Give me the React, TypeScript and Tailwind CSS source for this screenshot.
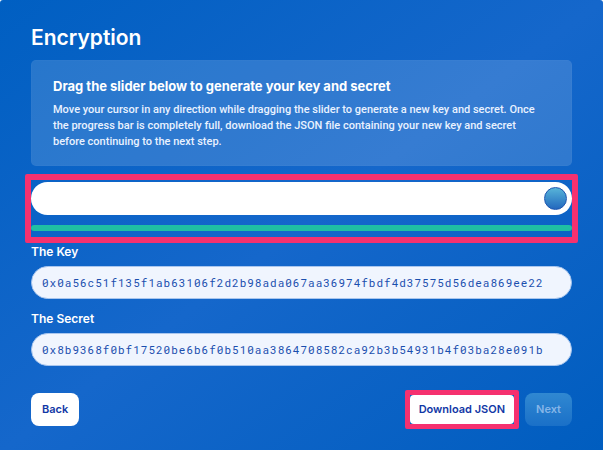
import { useState } from "react";

type FieldProps = { id: string; label: string; value: string };

function HexField({ id, label, value }: FieldProps) {
  return (
    <div className="flex flex-col gap-1.5">
      <label htmlFor={id} className="text-xs leading-4 font-semibold text-white">
        {label}
      </label>
      <input
        id={id}
        type="text"
        readOnly
        value={value}
        className="h-[33px] w-full rounded-full border border-[#a9c6ee] bg-[#f0f5fe] px-2.5 font-['Roboto_Mono','Liberation_Mono',monospace] text-[11px] tracking-[1px] text-[#1b4fae]"
      />
    </div>
  );
}

export default function App() {
  const [position, setPosition] = useState(100);

  return (
    <div className="min-h-screen bg-white font-[Inter,Roboto,sans-serif]">
      <main className="flex min-h-screen flex-col rounded-[3px] bg-[linear-gradient(to_bottom_right,#005fc2_0%,#1567cb_50%,#005dbf_100%)] px-[31px] pt-6 pb-6">
        <h1 className="text-[21px] leading-7 font-semibold text-white">Encryption</h1>

        <section className="mt-2 rounded-[5px] border border-white/2 bg-white/14 py-[15px] pr-6 pl-[21px]">
          <h2 className="text-[13px] leading-5 font-bold text-white">
            Drag the slider below to generate your key and secret
          </h2>
          <p className="mt-1.5 font-[Roboto,sans-serif] text-[11px] leading-4 font-medium text-[#e9f2ff]">
            Move your cursor in any direction while dragging the slider to generate a new key and secret. Once
            the progress bar is completely full, download the JSON file containing your new key and secret
            before continuing to the next step.
          </p>
        </section>

        <section className="-mx-1.5 mt-2 flex flex-col gap-2.5 rounded-[2px] border-6 border-[#f5316f] pt-0.5 pb-1.5">
          <input
            type="range"
            aria-label="Generate key and secret"
            min={0}
            max={100}
            value={position}
            onChange={(event) => setPosition(Number(event.target.value))}
            className="h-[33px] w-full cursor-pointer appearance-none rounded-full bg-white px-[5px] [&::-webkit-slider-thumb]:size-[23px] [&::-webkit-slider-thumb]:appearance-none [&::-webkit-slider-thumb]:rounded-full [&::-webkit-slider-thumb]:border [&::-webkit-slider-thumb]:border-[#1c55b0] [&::-webkit-slider-thumb]:bg-linear-to-b [&::-webkit-slider-thumb]:from-[#58b4d8] [&::-webkit-slider-thumb]:to-[#2468bd]"
          />
          <progress
            aria-label="Generation progress"
            max={100}
            value={100}
            className="block h-1.5 w-full appearance-none overflow-hidden rounded-full [&::-webkit-progress-bar]:bg-white/20 [&::-webkit-progress-value]:bg-[#1fbfa3]"
          />
        </section>

        <div className="mt-px flex flex-col gap-3">
          <HexField
            id="key"
            label="The Key"
            value="0x0a56c51f135f1ab63106f2d2b98ada067aa36974fbdf4d37575d56dea869ee22"
          />
          <HexField
            id="secret"
            label="The Secret"
            value="0x8b9368f0bf17520be6b6f0b510aa3864708582ca92b3b54931b4f03ba28e091b"
          />
        </div>

        <div className="mt-6 flex items-center text-[11px] font-semibold">
          <button type="button" className="h-[33px] rounded-lg bg-white px-[11px] text-[#1238a6]">
            Back
          </button>
          <div className="ml-auto rounded-[2px] border-5 border-[#f5316f]">
            <button type="button" className="block h-[29px] rounded-[4px] bg-white px-[9px] text-[#1238a6]">
              Download JSON
            </button>
          </div>
          <button
            type="button"
            disabled
            className="ml-1.5 h-[33px] rounded-lg bg-linear-to-b from-[#3088d1] to-[#1a70c8] px-[11px] text-[#86b6e8]"
          >
            Next
          </button>
        </div>
      </main>
    </div>
  );
}
